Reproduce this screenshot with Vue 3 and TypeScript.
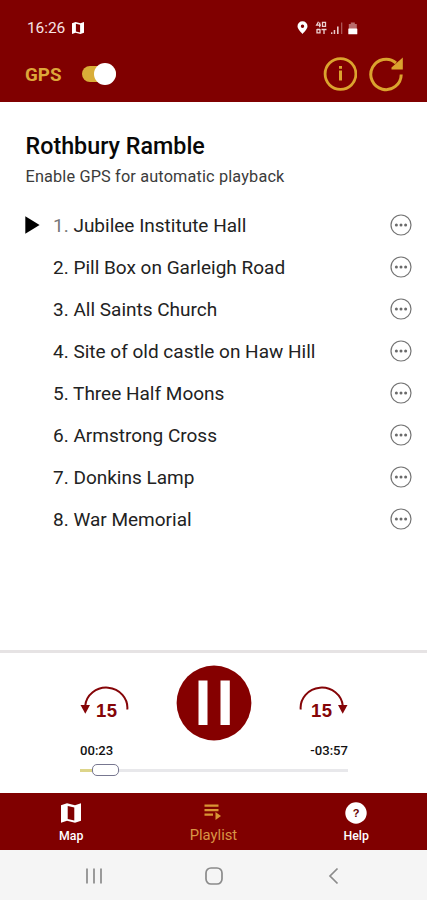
<script setup lang="ts">
import { ref } from 'vue'

interface Stop {
  id: number
  title: string
}

const stops: Stop[] = [
  { id: 1, title: 'Jubilee Institute Hall' },
  { id: 2, title: 'Pill Box on Garleigh Road' },
  { id: 3, title: 'All Saints Church' },
  { id: 4, title: 'Site of old castle on Haw Hill' },
  { id: 5, title: 'Three Half Moons' },
  { id: 6, title: 'Armstrong Cross' },
  { id: 7, title: 'Donkins Lamp' },
  { id: 8, title: 'War Memorial' },
]

const current = ref(1)
const gps = ref(true)
</script>

<template>
  <div class="app">
    <header class="header">
      <div class="status">
        <span class="clock">16:26</span>
        <svg class="status-map" width="12" height="12" viewBox="0 0 20 20">
          <path fill="#fff" fill-rule="evenodd" d="M0 2 6 0l8 2 6-2v18l-6 2-8-2-6 2zM6.500 3v13l7 1.600v-13z" />
        </svg>
        <svg class="status-icons" width="64" height="16" viewBox="0 0 64 16">
          <path fill="#fff" fill-rule="evenodd" d="M7.500 1.300a5 5 0 0 1 5 5c0 3-5 7.600-5 7.600s-5-4.600-5-7.600a5 5 0 0 1 5-5zm0 3.200a1.700 1.700 0 1 0 0 3.400 1.700 1.700 0 0 0 0-3.400z" />
          <g fill="none" stroke="#ecd2d2" stroke-width="1.300">
            <path d="M23.500 1.700 21.600 5.200H26M24.700 2.500v4.700M27.500 2.300h3v4h-3zM22 9.500h3M22 8.900v4h3v-4M26.500 9.500h5M29 9v5" />
          </g>
          <g fill="#e8caca">
            <rect x="36" y="12.300" width="1.400" height="1.700" />
            <rect x="38.700" y="10" width="1.500" height="4" />
            <rect x="42" y="6.500" width="1.600" height="7.500" />
            <rect x="46" y="2.500" width="1.300" height="11.500" opacity=".42" />
          </g>
          <path d="M53.800 4h2V2.500h4V4h2v5h-8z" fill="#b96c6c" />
          <rect x="53.300" y="8.500" width="9" height="5.800" rx=".6" fill="#fff" />
        </svg>
      </div>
      <div class="toolbar">
        <span class="gps-label">GPS</span>
        <button class="switch" :class="{ on: gps }" aria-label="GPS" @click="gps = !gps"><i></i></button>
        <svg class="info" width="34" height="34" viewBox="0 0 34 34">
          <circle cx="17.500" cy="17" r="15.400" fill="none" stroke="#dba32e" stroke-width="2.800" />
          <path fill="#dba32e" d="M16 13.500h3v10h-3zM16 9h3v2.700h-3z" />
        </svg>
        <svg class="reload" width="36" height="36" viewBox="0 0 36 36">
          <path d="M33.200 18.500A15.200 15.200 0 1 1 28 7" fill="none" stroke="#dba32e" stroke-width="3" />
          <path d="M34.800 1.500V13.600H23.500V11.500z" fill="#dba32e" />
        </svg>
      </div>
    </header>

    <main class="content">
      <h1>Rothbury Ramble</h1>
      <p>Enable GPS for automatic playback</p>
      <ul>
        <li v-for="stop in stops" :key="stop.id" @click="current = stop.id">
          <span class="marker">
            <svg v-if="stop.id === current" width="15" height="18" viewBox="0 0 15 18">
              <path d="M.300.200 14.600 9 .300 17.800z" />
            </svg>
          </span>
          <span class="name"><span :class="{ playing: stop.id === current }">{{ stop.id }}.</span> {{ stop.title }}</span>
          <svg class="more" width="22" height="22" viewBox="0 0 22 22">
            <circle cx="11" cy="11" r="10" fill="none" stroke="#747474" stroke-width="1.200" />
            <g fill="#6a6a6a">
              <circle cx="6.400" cy="11" r="1.500" />
              <circle cx="11" cy="11" r="1.500" />
              <circle cx="15.600" cy="11" r="1.500" />
            </g>
          </svg>
        </li>
      </ul>
    </main>

    <section class="player">
      <div class="controls">
        <svg width="50" height="34" viewBox="0 0 50 34">
          <path d="M5.200 20A21 20 0 0 1 47.300 23.500" fill="none" stroke="#850508" stroke-width="2" />
          <path d="M.500 19H10L5.300 27.800z" fill="#850508" />
          <text class="skip" x="16" y="30.500" textLength="21">15</text>
        </svg>
        <svg width="76" height="76" viewBox="0 0 76 76">
          <circle cx="38" cy="38" r="37.400" fill="#850000" />
          <path fill="#fff" d="M22.500 15.500h9v44.500h-9zM44.500 15.500h9.300v44.500h-9.300z" />
        </svg>
        <svg width="50" height="34" viewBox="0 0 50 34">
          <path d="M2.700 23.500A21 20 0 0 1 44.800 20" fill="none" stroke="#850508" stroke-width="2" />
          <path d="M49.500 19H40L44.700 27.800z" fill="#850508" />
          <text class="skip" x="13" y="30.500" textLength="21">15</text>
        </svg>
      </div>
      <div class="times"><span>00:23</span><span>-03:57</span></div>
      <div class="seek"><i class="played"></i><i class="thumb"></i><i class="rest"></i></div>
    </section>

    <nav class="tabs">
      <a class="tab">
        <svg width="20" height="20" viewBox="0 0 20 20">
          <path fill="#fff" fill-rule="evenodd" d="M0 2.300 6 .300l8 2 6-2v17.400l-6 2-8-2-6 2zM6.700 3v13l6.600 1.500v-13z" />
        </svg>
        <span>Map</span>
      </a>
      <a class="tab active">
        <svg width="18" height="20" viewBox="0 0 18 20">
          <path fill="#d99535" d="M.500 1.500h14v2.200H.500zM.500 6h14v2.200H.500zM.500 10.500h8.500v2.200H.500zM11.500 9l5.500 4-5.500 4z" />
        </svg>
        <span>Playlist</span>
      </a>
      <a class="tab help">
        <svg width="22" height="22" viewBox="0 0 22 22">
          <circle cx="11" cy="11" r="10.700" fill="#fff" />
          <text class="question" x="11" y="15" text-anchor="middle">?</text>
        </svg>
        <span>Help</span>
      </a>
    </nav>

    <footer class="system">
      <svg width="18" height="18" viewBox="0 0 18 18">
        <path d="M2 1.500v15M9 1.500v15M16 1.500v15" stroke="#8b8b8b" stroke-width="1.700" />
      </svg>
      <svg width="18" height="18" viewBox="0 0 18 18">
        <rect x="1" y="1" width="16" height="16" rx="5" fill="none" stroke="#8b8b8b" stroke-width="1.700" />
      </svg>
      <svg width="18" height="18" viewBox="0 0 18 18">
        <path d="M12.500 1.500 5 9l7.500 7.500" fill="none" stroke="#8b8b8b" stroke-width="1.700" />
      </svg>
    </footer>
  </div>
</template>

<style>
body {
  margin: 0;
}
</style>

<style scoped>
.app {
  display: flex;
  flex-direction: column;
  width: 427px;
  height: 900px;
  overflow: hidden;
  background: #fff;
  color: #111;
  font-family: Roboto, "Liberation Sans", sans-serif;
}
svg {
  display: block;
  flex: none;
}
.header {
  box-sizing: border-box;
  height: 102px;
  background: #800000;
}
.status {
  display: flex;
  align-items: center;
  height: 55px;
  padding: 0 68px 0 27px;
}
.clock {
  width: 39px;
  color: #f6e4e4;
  font-size: 15.500px;
  letter-spacing: -0.100px;
}
.status-map {
  margin-left: 6px;
}
.status-icons {
  margin-left: auto;
}
.toolbar {
  display: flex;
  align-items: center;
  height: 37px;
  padding: 0 23px 0 25px;
}
.gps-label {
  width: 57px;
  color: #dda63a;
  font-size: 18.800px;
  font-weight: 700;
  line-height: 20px;
  margin-top: 2px;
}
.switch {
  display: flex;
  align-items: center;
  width: 34px;
  height: 16px;
  padding: 0;
  border: 0;
  border-radius: 8px;
  background: #94635f;
}
.switch.on {
  justify-content: flex-end;
  background: #d9ad38;
}
.switch i {
  flex: none;
  width: 22px;
  height: 22px;
  border-radius: 50%;
  background: #fff;
}
.info {
  margin-left: auto;
}
.reload {
  margin-left: 11px;
}
.content {
  box-sizing: border-box;
  height: 548px;
  padding: 29px 15px 0 25px;
}
h1 {
  margin: 0 0 0 0.500px;
  color: #080808;
  font-size: 23.300px;
  line-height: 30px;
  font-weight: 500;
}
p {
  margin: 5px 0 0 0.500px;
  color: #3b3b3b;
  font-size: 16.300px;
  letter-spacing: 0.150px;
  line-height: 22px;
}
ul {
  margin: 16px 0 0;
  padding: 0;
  list-style: none;
}
li {
  display: flex;
  align-items: center;
  height: 42px;
}
.marker {
  width: 28px;
}
.name {
  flex: 1;
  padding-top: 2px;
  color: #222;
  font-size: 19px;
  line-height: 24px;
}
.playing {
  color: #777;
}
.player {
  box-sizing: border-box;
  height: 143px;
  padding: 12px 79px 0 80px;
  border-top: 3px solid #e6e3e4;
}
.controls {
  display: flex;
  align-items: center;
  justify-content: space-between;
}
.skip {
  fill: #850508;
  font: 700 18.500px "Liberation Sans", sans-serif;
}
.times {
  display: flex;
  justify-content: space-between;
  margin-top: 2px;
  font-size: 13.100px;
  font-weight: 500;
  line-height: 16px;
}
.seek {
  display: flex;
  align-items: center;
  height: 12px;
  margin-top: 5px;
}
.played {
  width: 12px;
  height: 3px;
  background: #ddd58a;
}
.thumb {
  box-sizing: border-box;
  width: 27px;
  height: 12px;
  border: 1.500px solid #777790;
  border-radius: 5px;
}
.rest {
  flex: 1;
  height: 3px;
  background: #e8e8eb;
}
.tabs {
  display: grid;
  grid-template-columns: repeat(3, 142.300px);
  height: 57px;
  background: #800000;
}
.tab {
  display: flex;
  flex-direction: column;
  align-items: center;
  color: #fff;
  font-size: 12.300px;
  font-weight: 500;
}
.help {
  padding-left: 1px;
}
.system {
  display: flex;
  flex: 1;
  justify-content: space-between;
  padding: 17px 84px 0 85px;
  background: #f5f5f5;
}
.tab svg {
  height: 22px;
  margin-top: 9px;
}
.tab span {
  margin-top: 4px;
  line-height: 17px;
}
.tab.active {
  color: #d99545;
  font-size: 14.800px;
  font-weight: 400;
}
.tab.active span {
  margin-top: 3px;
}
.question {
  font: 700 11px "Liberation Sans", sans-serif;
  fill: #600;
}
</style>
